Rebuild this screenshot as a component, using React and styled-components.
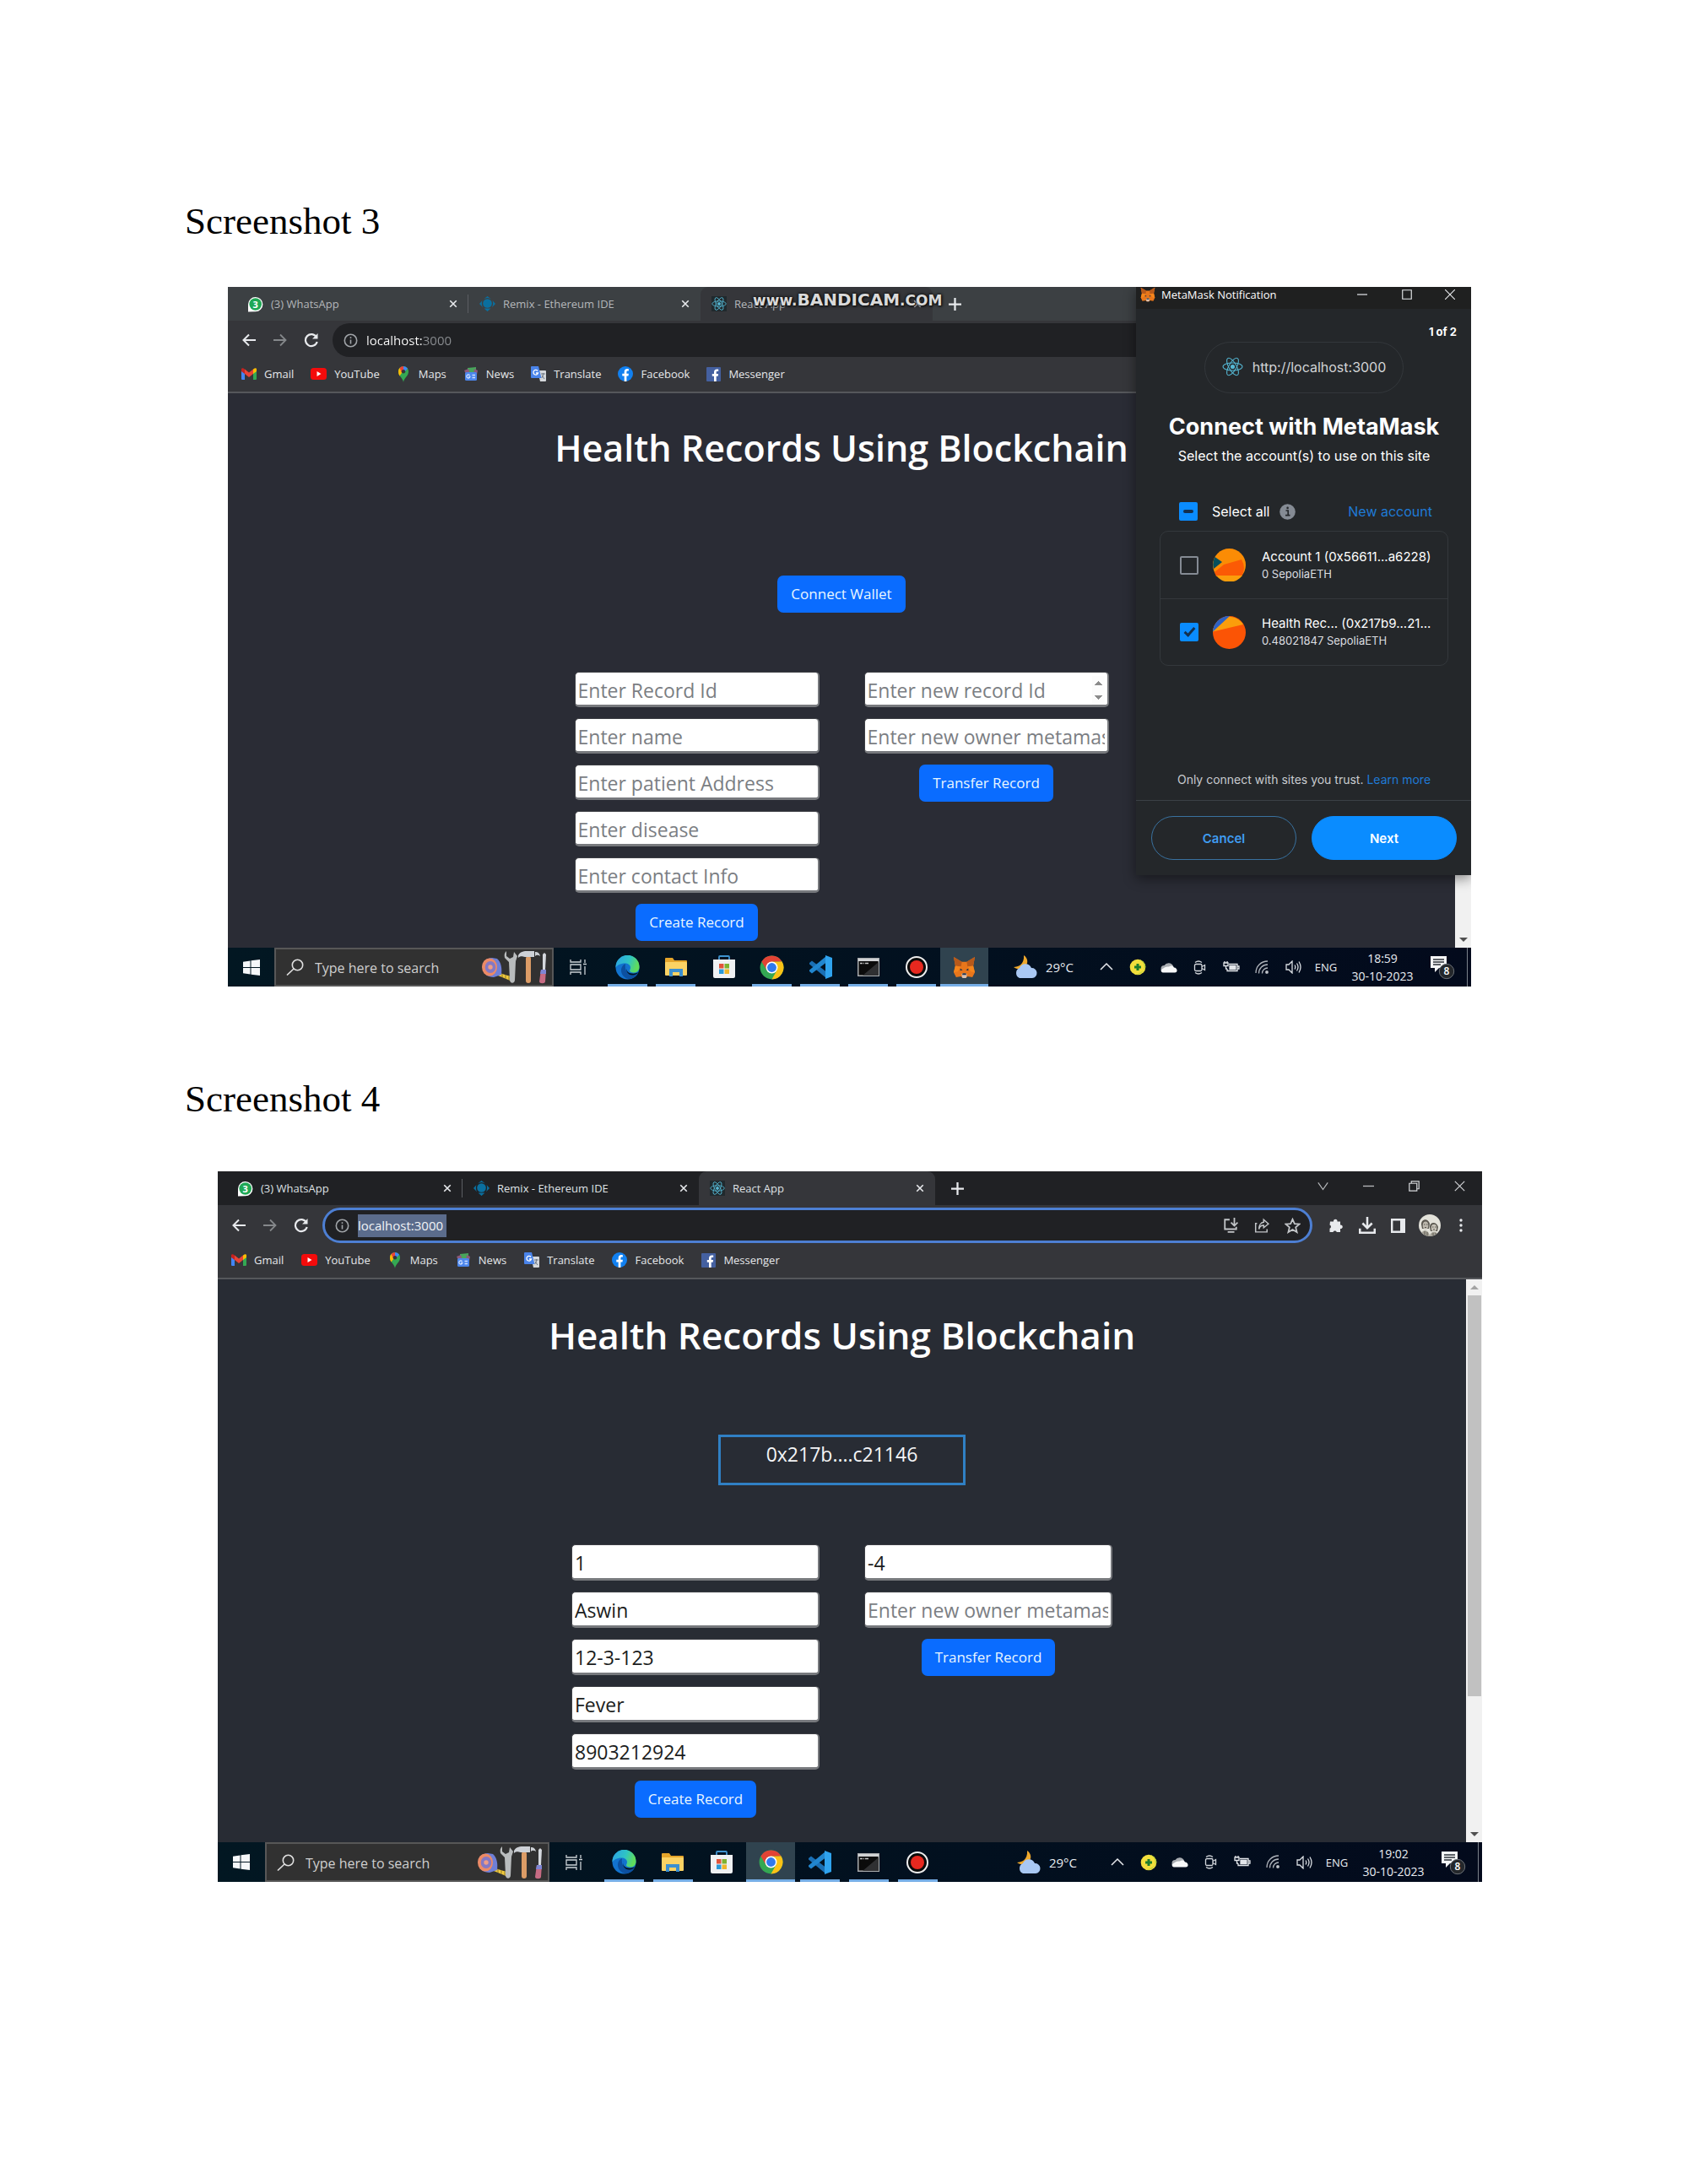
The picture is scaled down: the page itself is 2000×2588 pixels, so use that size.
import React, { useEffect, useRef } from "react";
import styled, { createGlobalStyle, css } from "styled-components";

const uiFont = '"Open Sans", "Noto Sans", sans-serif';
const walletFont = 'Inter, "Open Sans", sans-serif';

const GlobalStyle = createGlobalStyle`
  *, *::before, *::after { box-sizing: border-box; }
  body { margin: 0; background: #fff; }
  button, input { font: inherit; color: inherit; margin: 0; padding: 0; border: 0; background: none; }
  svg { display: block; flex: none; }
`;

/* ---------- document ---------- */

const Document = styled.main`
  padding: 236px 0 0;
`;
const Caption = styled.h2`
  margin: 0;
  padding-left: 219px;
  font: 400 45px/52px "Liberation Serif", "Times New Roman", serif;
  color: #000;
`;
const Figure = styled.section`
  position: relative;
  margin: ${(p) => p.$margin};
  overflow: hidden;
  font-family: ${uiFont};
  background: ${(p) => p.$page};
`;

/* ---------- browser chrome ---------- */

const TabStrip = styled.div`
  display: flex;
  height: 40px;
  padding-left: 10px;
  background: ${(p) => (p.$dim ? "#3c4043" : "#202124")};
`;
const Tab = styled.div`
  display: flex;
  align-items: center;
  gap: 9px;
  width: ${(p) => p.$width}px;
  padding: 0 12px 0 13px;
  font-size: 13px;
  line-height: 20px;
  color: ${(p) => (p.$dim ? "#b4b7ba" : "#dfe1e5")};
  ${(p) => p.$active && css`
    background: #35363a;
    border-radius: 9px 9px 0 0;
  `}
  ${(p) => p.$divided && css`
    background: linear-gradient(#5b5e62, #5b5e62) right center / 1px 22px no-repeat;
  `}
`;
const TabTitle = styled.span`
  flex: 1;
  white-space: nowrap;
`;
const IconButton = styled.button`
  display: flex;
  align-items: center;
  justify-content: center;
  width: ${(p) => p.$w || 18}px;
  height: ${(p) => p.$h || 26}px;
  flex: none;
  color: ${(p) => p.$color || "#e8eaed"};
`;
const WindowControls = styled.div`
  display: flex;
  margin-left: auto;
  height: 34px;
  align-items: center;
`;
const Toolbar = styled.div`
  display: flex;
  align-items: center;
  height: ${(p) => p.$height}px;
  padding: 0 7px 0 16px;
  background: #35363a;
`;
const NavButtons = styled.div`
  display: flex;
  gap: 19px;
  margin-right: 16px;
`;
const Omnibox = styled.div`
  flex: 1;
  display: flex;
  align-items: center;
  height: ${(p) => (p.$focus ? 42 : 40)}px;
  padding: 0 2px 0 ${(p) => (p.$focus ? 12 : 13)}px;
  gap: 10px;
  margin-right: 9px;
  background: #202124;
  border: ${(p) => (p.$focus ? "3px solid #4d7fd3" : "0")};
  border-radius: 21px;
`;
const OmniboxActions = styled.div`
  display: flex;
  margin-left: auto;
`;
const UrlInput = styled.input`
  height: 27px;
  width: 105px;
  font-size: 15px;
  line-height: 27px;
  outline: none;
  ${(p) => p.$selected
    ? css`background: #5b6c8c; color: #f1f3f6;`
    : css`
      color: transparent;
      background: linear-gradient(90deg, #fff 67px, #8b8e92 67px);
      -webkit-background-clip: text;
      background-clip: text;
    `}
`;
const Bookmarks = styled.nav`
  display: flex;
  align-items: center;
  gap: ${(p) => p.$gap}px;
  height: 40px;
  padding: 0 16px 4px;
  background: #35363a;
  border-bottom: 2px solid #55575b;
`;
const Bookmark = styled.a`
  display: flex;
  align-items: center;
  gap: 9px;
  font-size: 13px;
  line-height: 20px;
  color: #e6e8ea;
  text-decoration: none;
`;

/* ---------- health records page ---------- */

const Viewport = styled.div`
  display: flex;
`;
const Content = styled.div`
  flex: 1;
  display: flex;
  flex-direction: column;
  align-items: center;
  padding: ${(p) => p.$pad};
`;
const Title = styled.h1`
  margin: 0 0 ${(p) => p.$gap}px;
  font-size: ${(p) => p.$size}px;
  line-height: 56px;
  font-weight: 600;
  color: #fff;
  white-space: nowrap;
`;
const Primary = styled.button`
  height: 44px;
  padding: 0 16px;
  border-radius: 7px;
  background: #0a6cff;
  color: #e9f6ff;
  font-size: 17px;
  line-height: 24px;
  white-space: nowrap;
`;
const AddressBox = styled.div`
  width: 293px;
  height: 60px;
  padding-top: 4px;
  border: 3px solid #3080c4;
  text-align: center;
  font-size: 23px;
  line-height: 32px;
  color: #f4f5f7;
`;
const Forms = styled.div`
  display: flex;
  align-items: flex-start;
  gap: 53px;
  margin-top: 70px;
`;
const Form = styled.form`
  display: flex;
  flex-direction: column;
  align-items: center;
  gap: 13px;
`;
const Field = styled.input`
  width: ${(p) => p.$w}px;
  height: ${(p) => p.$h}px;
  padding: 3px 3px 0;
  background: #fff;
  border: solid #6f7175;
  border-width: 1px 2px 3px 1px;
  border-color: #3b3d43 #77797d #77797d #3b3d43;
  border-radius: 5px;
  color: #1b1d20;
  font-size: 23px;
  &::placeholder { color: #7b7e83; opacity: 1; }
  &::-webkit-inner-spin-button {
    opacity: ${(p) => (p.$spinner ? 1 : 0)};
    ${(p) => !p.$spinner && "display: none;"}
    height: 34px;
  }
`;
const Scrollbar = styled.div`
  display: flex;
  flex-direction: column;
  align-items: center;
  justify-content: space-between;
  width: 19px;
  background: #f1f1f1;
`;
const Arrow = styled.span`
  height: 19px;
  display: flex;
  align-items: center;
  &::before {
    content: "";
    border: 5px solid transparent;
    ${(p) => (p.$up
      ? "border-bottom-color: #a3a3a3; border-top: 0;"
      : "border-top-color: #505050; border-bottom: 0;")}
  }
`;
const Thumb = styled.span`
  width: 16px;
  height: 475px;
  margin-bottom: auto;
  background: #c1c1c1;
`;

/* ---------- taskbar ---------- */

const Bar = styled.footer`
  display: flex;
  align-items: stretch;
  height: ${(p) => p.$height}px;
  background: linear-gradient(90deg, #021722, #02101f 60%, #030a1c);
  color: #e9edf2;
`;
const StartButton = styled.button`
  display: flex;
  align-items: center;
  justify-content: center;
  width: ${(p) => p.$w}px;
`;
const SearchBox = styled.label`
  display: flex;
  align-items: center;
  gap: 13px;
  width: ${(p) => p.$w}px;
  padding: 0 4px 0 12px;
  background: #313131;
  border: 2px solid #575757;
`;
const SearchInput = styled.input`
  flex: 1;
  min-width: 0;
  padding-top: 2px;
  font-size: 16px;
  &::placeholder { color: #cfcfcf; opacity: 1; }
`;
const TaskButton = styled.button`
  display: flex;
  align-items: center;
  justify-content: center;
  width: ${(p) => p.$w}px;
  background:
    ${(p) => (p.$open
      ? `linear-gradient(#76aee6, #76aee6) bottom / ${p.$current ? "100%" : "47px"} 3px no-repeat,`
      : "")}
    ${(p) => (p.$current ? "#30434f" : "transparent")};
`;
const Weather = styled.div`
  display: flex;
  align-items: center;
  gap: 9px;
  margin-left: auto;
  padding-right: ${(p) => p.$gap}px;
  font-size: 15px;
`;
const Tray = styled.div`
  display: flex;
  align-items: center;
`;
const Language = styled.span`
  width: 40px;
  text-align: center;
  font-size: 13px;
`;
const Clock = styled.time`
  width: 94px;
  text-align: center;
  font-size: 14px;
  line-height: 21px;
`;
const ShowDesktop = styled.button`
  width: 5px;
  margin-left: 5px;
  border-left: 1px solid #7c828b;
`;

/* ---------- wallet popup ---------- */

const Popup = styled.aside`
  position: absolute;
  top: 0;
  right: 0;
  width: 397px;
  height: 697px;
  display: flex;
  flex-direction: column;
  background: #24272a;
  box-shadow: 0 4px 14px rgba(0, 0, 0, 0.45);
  font-family: ${walletFont};
  color: #fff;
`;
const PopupBar = styled.header`
  display: flex;
  align-items: center;
  gap: 7px;
  height: 26px;
  padding: 0 0 8px 5px;
  background: #1f2020;
  font: 13px/18px ${uiFont};
`;
const PopupControls = styled.div`
  display: flex;
  margin-left: auto;
`;
const PopupBody = styled.div`
  flex: 1;
  display: flex;
  flex-direction: column;
  align-items: center;
  padding: 17px 27px 14px 28px;
`;
const Step = styled.span`
  align-self: flex-end;
  margin-right: -10px;
  font-size: 13px;
  line-height: 20px;
  font-weight: 700;
`;
const Origin = styled.div`
  display: flex;
  align-items: center;
  gap: 11px;
  height: 61px;
  margin-top: 2px;
  padding: 0 20px 2px;
  border: 1px solid #33373b;
  border-radius: 31px;
  font-size: 16px;
  color: #d2d4d6;
`;
const Heading = styled.h2`
  margin: 22px 0 6px;
  font-size: 27px;
  line-height: 36px;
  font-weight: 700;
  white-space: nowrap;
`;
const Sub = styled.p`
  margin: 0;
  font-size: 16px;
  line-height: 20px;
  white-space: nowrap;
`;
const SelectRow = styled.div`
  align-self: stretch;
  display: flex;
  align-items: center;
  height: 24px;
  margin: 44px 0 11px;
  padding: 0 19px 0 23px;
  font-size: 16px;
`;
const SelectLabel = styled.label`
  display: flex;
  align-items: center;
  gap: 17px;
  margin-right: 12px;
`;
const WalletLink = styled.a`
  color: #1f7ad6;
  text-decoration: none;
  ${(p) => p.$end && "margin-left: auto;"}
`;
const AccountList = styled.div`
  align-self: stretch;
  border: 1px solid #34383c;
  border-radius: 10px;
`;
const Account = styled.label`
  display: flex;
  align-items: center;
  height: 79px;
  padding: 0 0 0 23px;
  & + & { border-top: 1px solid #34383c; }
`;
const Check = styled.input`
  appearance: none;
  width: 22px;
  height: 22px;
  flex: none;
  display: flex;
  align-items: center;
  justify-content: center;
  border: 2px solid #858b94;
  border-radius: 2px;
  &:checked, &:indeterminate { background: #0a8cff; border-color: #0a8cff; }
  &:checked::after {
    content: "";
    width: 7px;
    height: 13px;
    margin-bottom: 4px;
    border: solid #14304f;
    border-width: 0 3px 3px 0;
    transform: rotate(42deg);
  }
  &:indeterminate::after {
    content: "";
    width: 12px;
    height: 4px;
    border-radius: 2px;
    background: #14304f;
  }
`;
const Avatar = styled.svg`
  margin: 0 19px 0 17px;
`;
const AccountText = styled.span`
  display: flex;
  flex-direction: column;
  font-size: 15px;
  line-height: 20px;
  white-space: nowrap;
  small { font-size: 13px; color: #dcdee0; }
`;
const Trust = styled.p`
  margin: auto 0 0;
  font-size: 14px;
  line-height: 20px;
  color: #c9ccd0;
  white-space: nowrap;
`;
const PopupFooter = styled.footer`
  display: grid;
  grid-template-columns: 1fr 1fr;
  gap: 18px;
  padding: 18px 17px 18px 18px;
  border-top: 1px solid #3b4045;
`;
const Pill = styled.button`
  height: 52px;
  border-radius: 26px;
  font-size: 15px;
  font-weight: 600;
  border: 1px solid ${(p) => (p.$solid ? "#0a8cff" : "#39719f")};
  background: ${(p) => (p.$solid ? "#0a8cff" : "transparent")};
  color: ${(p) => (p.$solid ? "#fff" : "#3f9cf0")};
`;
const Watermark = styled.div`
  position: absolute;
  top: 5px;
  left: 622px;
  display: flex;
  align-items: baseline;
  font: 700 20px/20px "DejaVu Sans", sans-serif;
  color: #dadada;
  text-shadow: 0 0 3px #111, 0 0 4px #111, 1px 1px 2px #111;
  small { font-size: 17px; }
`;

/* ---------- icons ---------- */

const WhatsAppIcon = () => (
  <svg width="19" height="19" viewBox="0 0 19 19">
    <path d="M1 18.500V9.500A8.700 8.700 0 1 1 9.700 18.300Z" fill="#fff" />
    <circle cx="9.700" cy="9.500" r="7.300" fill="#1fa855" />
    <text x="9.700" y="13.500" textAnchor="middle" fontSize="11" fontWeight="700" fill="#fff">3</text>
  </svg>
);
const RemixIcon = () => (
  <svg width="19" height="18" viewBox="0 0 19 18" fill="#0a6f9f">
    <path d="M9.500 0 14 3.500a8 8 0 0 0-9 0Z" />
    <circle cx="9.500" cy="8.500" r="5.300" />
    <path d="M3.500 5 0 9l4 4.200C2.700 10.500 2.500 7.500 3.500 5ZM15.500 5 19 9l-4 4.200c1.300-2.700 1.500-5.700.5-8.200ZM5.500 14.500h8L9.500 18Z" />
  </svg>
);
const ReactIcon = ({ size = 18, plate = true, stroke = 1.1 }) => (
  <svg width={size} height={size} viewBox="0 0 24 24" fill="none" stroke="#55b7d3" strokeWidth={stroke}>
    {plate && <rect width="24" height="24" fill="#20292d" stroke="none" />}
    <ellipse cx="12" cy="12" rx="11" ry="4.300" />
    <ellipse cx="12" cy="12" rx="11" ry="4.300" transform="rotate(60 12 12)" />
    <ellipse cx="12" cy="12" rx="11" ry="4.300" transform="rotate(120 12 12)" />
    <circle cx="12" cy="12" r="2" fill="#55b7d3" />
  </svg>
);
const Line = ({ d, w = 16, h = w, box = "0 0 16 16", sw = 2, fill = "none" }) => (
  <svg width={w} height={h} viewBox={box} fill={fill} stroke="currentColor" strokeWidth={sw}>
    <path d={d} />
  </svg>
);
const CloseIcon = () => <Line w={10} d="M2 2l12 12M14 2 2 14" sw={2.6} />;
const PlusIcon = () => <Line w={15} d="M8 0v16M0 8h16" sw={2.4} />;
const InfoIcon = () => (
  <svg width="17" height="17" viewBox="0 0 17 17" fill="none" stroke="#a0a4a8" strokeWidth="1.600">
    <circle cx="8.500" cy="8.500" r="7.200" />
    <path d="M8.500 7.500v5M8.500 4.300v1.700" />
  </svg>
);
const ReloadIcon = () => (
  <svg width="18" height="18" viewBox="0 0 18 18" fill="none" stroke="currentColor" strokeWidth="2.200">
    <path d="M15 5.500A7 7 0 1 0 15.700 11" />
    <path d="M16.500 1v6.500H10Z" fill="currentColor" stroke="none" />
  </svg>
);
const GmailIcon = () => (
  <svg width="18" height="14" viewBox="0 0 18 14">
    <path d="M0 3v9.500A1.300 1.300 0 0 0 1.300 14H4V5Z" fill="#4285f4" />
    <path d="M18 3v9.500a1.300 1.300 0 0 1-1.300 1.500H14V5Z" fill="#34a853" />
    <path d="M4 1.500 9 5.500l5-4V7l-5 4-5-4Z" fill="#ea4335" />
    <path d="M14 1.500 16 .3A1.500 1.500 0 0 1 18 2v2l-4 3Z" fill="#fbbc04" />
    <path d="M4 1.500 2 .3A1.500 1.500 0 0 0 0 2v2l4 3Z" fill="#c5221f" />
  </svg>
);
const YouTubeIcon = () => (
  <svg width="19" height="14" viewBox="0 0 19 14">
    <rect width="19" height="14" rx="3.500" fill="#f40b0b" />
    <path d="M7.500 4v6l5-3Z" fill="#fff" />
  </svg>
);
const MapsIcon = () => (
  <svg width="17" height="19" viewBox="0 0 17 19">
    <path d="M8 19C7.600 14 2 12 2 6.300A6 6 0 0 1 8 0a6 6 0 0 1 6 6.300C14 12 8.400 14 8 19Z" fill="#34a853" />
    <path d="M2 6.300A6 6 0 0 1 3.500 2.100l4 3.900-4 5.600A9 9 0 0 1 2 6.300Z" fill="#fbbc04" />
    <path d="M3.500 2.100A6 6 0 0 1 8 0v5L6 7.500Z" fill="#ea4335" />
    <path d="M8 0a6 6 0 0 1 5 2.800L8 8Z" fill="#4285f4" />
    <circle cx="8" cy="6.300" r="2.200" fill="#35363a" />
  </svg>
);
const NewsIcon = () => (
  <svg width="18" height="16" viewBox="0 0 18 16">
    <path d="M5 1l10-1v8H5Z" fill="#48a55b" />
    <path d="M1 4l5-2 2 6H3ZM13 2l4 2-1 5h-4Z" fill="#8d5a7c" />
    <rect x="2" y="6" width="14" height="10" rx="1.500" fill="#4c86ec" />
    <path d="M7.500 9.800a2 2 0 1 0 .3 1.700H6.300M10.500 9.500h3.500M10.500 12.500h3.500" stroke="#cfe0ff" fill="none" strokeWidth="1.300" />
  </svg>
);
const TranslateIcon = () => (
  <svg width="18" height="18" viewBox="0 0 18 18">
    <path d="M8 5h9a1 1 0 0 1 1 1v11a1 1 0 0 1-1 1h-6Z" fill="#d5d8dc" />
    <path d="M0 1a1 1 0 0 1 1-1h8l3.500 14H1a1 1 0 0 1-1-1Z" fill="#4a84ea" />
    <path d="M8 5.500A2.800 2.800 0 1 0 8.500 8H6" stroke="#fff" fill="none" strokeWidth="1.300" />
    <path d="M12 9h5M14.500 8v1c0 3-1 4-2 5M13 11l3 4" stroke="#6b7480" fill="none" />
  </svg>
);
const FacebookIcon = () => (
  <svg width="18" height="18" viewBox="0 0 18 18">
    <circle cx="9" cy="9" r="9" fill="#1180f0" />
    <path d="M7.700 18v-6.500H5.300V8.800h2.400V6.700c0-2.400 1.400-3.600 3.500-3.600l1.700.1v2.400h-1.200c-1 0-1.300.6-1.300 1.300v1.900h2.500l-.4 2.700h-2.100V18Z" fill="#fff" />
  </svg>
);
const MessengerIcon = () => (
  <svg width="17" height="17" viewBox="0 0 17 17">
    <rect width="17" height="17" rx="1" fill="#4460a0" />
    <path d="M9 17v-6.300H6.800V8H9V6.100C9 3.700 10.300 2.500 12.400 2.500l1.800.1V5h-1.300c-1 0-1.200.5-1.200 1.200V8h2.400l-.4 2.700h-2V17Z" fill="#fff" />
  </svg>
);
const FoxIcon = ({ size }) => (
  <svg width={size} height={size} viewBox="0 0 28 28">
    <path d="M1 1l10 6h6l10-6-2 11 2 8-3 6-6-1-2 2h-4l-2-2-6 1-3-6 2-8Z" fill="#e8761b" />
    <path d="M1 1l10 6-1 6-7-1ZM27 1l-10 6 1 6 7-1Z" fill="#b8591a" />
    <path d="M3 12l7 1-4 6-5 1ZM25 12l-7 1 4 6 5 1Z" fill="#f6851b" />
    <path d="M9 15l3 2-3 1ZM19 15l-3 2 3 1Z" fill="#23344a" />
    <path d="M11 22l1-1h4l1 1v3l-1 2h-4l-1-2Z" fill="#d7c1b3" />
    <path d="M12 21h4l.5 2h-5Z" fill="#23344a" />
  </svg>
);
const WindowsIcon = () => (
  <svg width="20" height="19" viewBox="0 0 20 19" fill="#f5f7f9">
    <path d="M0 2.700 8.500 1.500V9H0ZM9.500 1.300 20 0v9H9.500ZM0 10h8.500v7.500L0 16.300ZM9.500 10H20v9L9.500 17.700Z" />
  </svg>
);
const SearchIcon = () => (
  <svg width="21" height="20" viewBox="0 0 21 20" fill="none" stroke="#e0e0e0" strokeWidth="1.600">
    <circle cx="13.500" cy="7.500" r="6.200" />
    <path d="M9 12 1 19.500" />
  </svg>
);
const ToolsIcon = () => (
  <svg width="80" height="40" viewBox="0 0 80 40">
    <path d="M22 27 38 32l-1 5-17-7Z" fill="#f2cb3d" />
    <path d="M25 28v4M29 29v5M33 31v4" stroke="#8f7a2c" />
    <path d="M2 22C0 14 7 9 13 9l6 1c5 4 6 12 5 19l-9 3C8 32 3 28 2 22Z" fill="#6f7fd6" />
    <ellipse cx="10" cy="20" rx="9" ry="10.500" fill="#ec8a66" />
    <ellipse cx="11" cy="20" rx="6.300" ry="7" fill="#8478c4" />
    <circle cx="11" cy="20" r="2.700" fill="#ef9d86" />
    <path d="M30 1v6l4 3 4-2 1-6 4 5-2 6-1 22c0 5-6 5-6 0l-1-21-5-5c-1-4 0-6 2-8Z" fill="#b9bcbd" />
    <rect x="53" y="7" width="6" height="32" rx="3" fill="#dc9c66" />
    <path d="M44 6c3-5 7-5 12-5h7v7H52c-3 0-4-2-8 1ZM64 2c3 0 5 1 6 5-2-1-4-2-6 0Z" fill="#cdd1d6" />
    <path d="M73 5l2-2 2 2-1 18h-3Z" fill="#d5d8dd" />
    <path d="M71 23h6l-1 14c0 3-7 3-7 0Z" fill="#c76b83" />
    <path d="M71 23h6v5h-7Z" fill="#7f86d4" />
  </svg>
);
const TaskViewIcon = () => (
  <svg width="21" height="20" viewBox="0 0 21 20" fill="none" stroke="#cdd2d6" strokeWidth="1.300">
    <path d="M1 1v3h12V1M1 7h12v6H1ZM1 19v-3h12v3M18 1v4M18 9v10M16 6.500h4" />
  </svg>
);
const EdgeIcon = () => (
  <svg width="29" height="29" viewBox="0 0 29 29">
    <defs>
      <linearGradient id="edge" x1="0" x2="1" y1="0" y2=".3">
        <stop offset="0" stopColor="#2a9fe8" /><stop offset=".6" stopColor="#2fc4c4" /><stop offset="1" stopColor="#5fdc5c" />
      </linearGradient>
    </defs>
    <circle cx="14.500" cy="14.500" r="14" fill="#1273cf" />
    <path d="M.5 14.500A14 14 0 0 1 28.500 13c.5 5-3 7.500-7 7.500-3 0-4.500-1.200-4.500-2.400 0-1 1-1.500 1-3.600 0-3-3-5-6.500-5C6 9.500 2 12 .5 14.500Z" fill="url(#edge)" />
    <path d="M12 10c-4 2-6 6-4.500 11 1.300 4.500 6 7.500 10.500 7 4-.8 7-3.500 8.500-6-8 3.500-16-1-14.500-12Z" fill="#0c50a0" />
    <path d="M13.500 13c-1.500 3 .5 8 6 8.600 3 .3 5.500-.3 7.500-1.600-1 2.500-3 3-5.500 3.500-6 .7-10-5-8-10.500Z" fill="#02121f" />
  </svg>
);
const FolderIcon = () => (
  <svg width="26" height="24" viewBox="0 0 26 24">
    <path d="M0 2a1 1 0 0 1 1-1h8l2 3h14a1 1 0 0 1 1 1v5H0Z" fill="#e5a52b" />
    <rect y="6" width="26" height="16" rx="1" fill="#fbd264" />
    <path d="M5 14h16v9h-4v-5H9v5H5Z" fill="#3b8fd0" />
  </svg>
);
const StoreIcon = () => (
  <svg width="28" height="28" viewBox="0 0 28 28">
    <path d="M8 6V2a1 1 0 0 1 1-1h10a1 1 0 0 1 1 1v4" fill="none" stroke="#3f93cf" strokeWidth="1.800" />
    <path d="M1 5h26v20a2 2 0 0 1-2 2H3a2 2 0 0 1-2-2Z" fill="#eff1f3" />
    <path d="M8 10h5.500v5.500H8Z" fill="#e2543a" /><path d="M14.500 10H20v5.500h-5.500Z" fill="#7db32f" />
    <path d="M8 16.500h5.500V22H8Z" fill="#2a9ad8" /><path d="M14.500 16.500H20V22h-5.500Z" fill="#efb62a" />
  </svg>
);
const ChromeIcon = () => (
  <svg width="29" height="29" viewBox="0 0 48 48">
    <circle cx="24" cy="24" r="23" fill="#34a853" />
    <path d="M24 1A23 23 0 0 1 44 12.500L24 13 14 29.500 4 12.500A23 23 0 0 1 24 1Z" fill="#e24335" />
    <path d="M44 12.500A23 23 0 0 1 24 47l10-17.500L24 13Z" fill="#fbc216" />
    <circle cx="24" cy="24" r="11.500" fill="#fff" />
    <circle cx="24" cy="24" r="9" fill="#3079ee" />
  </svg>
);
const CodeIcon = () => (
  <svg width="28" height="28" viewBox="0 0 28 28">
    <path d="M1 9l3-2.500 17 13V27L1 10.500Z" fill="#1a6fb4" />
    <path d="M1 19l3 2.500 17-13V1L1 17.500Z" fill="#2186cf" />
    <path d="M20 0l8 3v22l-8 3Z" fill="#2fa3ee" />
  </svg>
);
const TerminalIcon = () => (
  <svg width="26" height="22" viewBox="0 0 26 22">
    <rect x=".75" y=".75" width="24.500" height="20.500" fill="#0b0b0b" stroke="#a9acae" strokeWidth="1.500" />
    <path d="M1 1h24v3H1Z" fill="#d0d2d4" />
    <path d="M3 6.500h3M7 6.500h1M9 6.500h4" stroke="#c4c4c4" strokeWidth="1.400" />
    <path d="M25 5v16H6Z" fill="#2f3032" />
  </svg>
);
const RecordIcon = () => (
  <svg width="26" height="26" viewBox="0 0 26 26">
    <circle cx="13" cy="13" r="12" fill="#0a0a0a" stroke="#eeeeee" strokeWidth="2" />
    <circle cx="13" cy="13" r="8" fill="#e6281f" />
  </svg>
);
const WeatherIcon = () => (
  <svg width="29" height="28" viewBox="0 0 29 28">
    <path d="M12 0c5 3 6 10 1 14-4 3-9 3-13 0 5 0 13-3 12-14Z" fill="#f0a92c" />
    <path d="M7 27a6.500 6.500 0 0 1 0-12 7.500 7.500 0 0 1 14 0 6 6 0 0 1 1 12Z" fill="#a9c8f3" />
  </svg>
);
const GreenIcon = () => (
  <svg width="20" height="20" viewBox="0 0 20 20">
    <circle cx="10" cy="10" r="9.300" fill="#f3df3c" />
    <path d="M10 .7a9.300 9.300 0 0 1 9.300 9.300c-4 6-8 8-12 8.700A9 9 0 0 0 10 .7Z" fill="#b4cf3a" />
    <path d="M8.500 6h3v2.500H14v3h-2.500V14h-3v-2.500H6v-3h2.500Z" fill="#1e7d2c" />
  </svg>
);
const CloudIcon = () => (
  <svg width="20" height="13" viewBox="0 0 20 13">
    <path d="M4.500 12a4 4 0 0 1 0-8A6 6 0 0 1 15 4.500L10 12Z" fill="#a9adb2" />
    <path d="M4 12.500C1.500 12.500 0 11 1 9c3-2 5-4 9-3.500 2-1.500 5-1.500 6 1 4 0 5 6 1 6Z" fill="#f7f8f9" />
  </svg>
);
const MeetIcon = () => (
  <svg width="15" height="17" viewBox="0 0 15 17" fill="none" stroke="#d3d7dc" strokeWidth="1.300">
    <rect x="1.500" y="4.500" width="8.500" height="8" rx="1.500" />
    <path d="M10 7.500l3.500-2v6l-3.500-2M2 2.500q4-3 8 0M2 14.500q4 3 8 0" />
  </svg>
);
const BatteryIcon = () => (
  <svg width="20" height="15" viewBox="0 0 20 15" fill="none" stroke="#e3e6ea" strokeWidth="1.300">
    <path d="M7 3.500h10v8H5V9M17 6h2v3h-2M1 2h5v3.500H1ZM3.500 5.500V9H5M2 0v2M5 0v2" />
    <path d="M8 5.500h7v4H8Z" fill="#e3e6ea" />
  </svg>
);
const NetworkIcon = () => (
  <svg width="17" height="17" viewBox="0 0 17 17" fill="none" stroke="#aeb3ba" strokeWidth="1.300">
    <path d="M1 15C1 7 7 1 15 1M4.500 15.500C4.500 9.500 9 5 15 5M8.500 15.500c0-4 3-6.500 6.500-6.500" />
    <circle cx="14" cy="14" r="1.300" fill="#e3e6ea" />
  </svg>
);
const VolumeIcon = () => (
  <svg width="19" height="16" viewBox="0 0 19 16" fill="none" stroke="#d9dde2" strokeWidth="1.300">
    <path d="M1 5h3l4-4v14l-4-4H1ZM11 5.500q1.500 2.500 0 5M13.500 3.500q3 4.500 0 9M16 1.500q4 6.500 0 13" />
  </svg>
);
const ChevronIcon = () => <Line w={16} d="M1 11l7-7 7 7" sw={1.5} />;
const NotificationIcon = () => (
  <svg width="30" height="30" viewBox="0 0 30 30">
    <path d="M1 2h19v14h-9l-5 5v-5H1Z" fill="#f4f5f6" />
    <path d="M4 6h13M4 9h13M4 12h9" stroke="#2b3038" strokeWidth="1.300" />
    <circle cx="20" cy="20" r="8.700" fill="#24272b" stroke="#6b7077" />
    <text x="20" y="24" textAnchor="middle" fontSize="12" fontWeight="600" fill="#fff">8</text>
  </svg>
);
const InstallIcon = () => <Line w={18} d="M7 2H2v10h12V9.500M5 15h7M12 0v8M8.500 5 12 8.500 15.500 5" sw={1.6} />;
const ShareIcon = () => <Line w={18} d="M3 6H1.500v9h12v-3M10 2l5 4.500-5 4V8C7 8 5.500 9.500 5 12 5 8 7 5 10 4.700Z" sw={1.3} />;
const StarIcon = () => <Line w={19} d="M8 1.500l2 4.500 4.800.4-3.700 3.200 1.200 4.800L8 11.800l-4.300 2.600 1.200-4.800L1.200 6.400 6 6Z" sw={1.5} />;
const PuzzleIcon = () => (
  <svg width="18" height="18" viewBox="0 0 18 18" fill="currentColor">
    <path d="M2 4.500h4a2.300 2.300 0 1 1 4.500 0H14V8.500a2.300 2.300 0 1 1 0 4.500v4h-4.200a2.300 2.300 0 0 0-4.300 0H1.500v-4.200a2.300 2.300 0 0 0 0-4.300Z" />
  </svg>
);
const DownloadIcon = () => <Line w={20} d="M8 0v10M3.500 6 8 10.500 12.500 6M1 11v4h14v-4" sw={2} />;
const SidePanelIcon = () => (
  <svg width="17" height="17" viewBox="0 0 17 17">
    <path d="M1.200 1.200h14.600v14.600H1.200Z" fill="none" stroke="currentColor" strokeWidth="2.400" />
    <path d="M11 1h5v15h-5Z" fill="currentColor" />
  </svg>
);
const ProfileIcon = () => (
  <svg width="26" height="26" viewBox="0 0 26 26">
    <defs><clipPath id="face"><circle cx="13" cy="13" r="13" /></clipPath></defs>
    <g clipPath="url(#face)">
      <rect width="26" height="26" fill="#e3e2da" />
      <path d="M3 12c0-7 8-8 10-1l-1 6H4ZM13 15c0-6 8-7 10 0l-1 5h-8Z" fill="#5a574f" />
      <ellipse cx="8" cy="13" rx="3.300" ry="4.500" fill="#bdb9ae" />
      <ellipse cx="18" cy="16" rx="3.300" ry="4.300" fill="#c6c2b7" />
      <path d="M6 12h1.500M9 12h1.500M7 15.500h2M16 15h1.500M19 15h1.500M17 18h2" stroke="#5a574f" />
      <path d="M2 26c1-9 10-9 11 0ZM13 26c1-7 9-7 11 0Z" fill="#a3a095" />
      <path d="M7 20v6M10 21v5M17 22v4M20 22v4" stroke="#605d55" />
    </g>
  </svg>
);
const DotsIcon = () => (
  <svg width="4" height="16" viewBox="0 0 4 16" fill="currentColor">
    <circle cx="2" cy="2" r="1.700" /><circle cx="2" cy="8" r="1.700" /><circle cx="2" cy="14" r="1.700" />
  </svg>
);
const InfoDot = () => (
  <svg width="19" height="19" viewBox="0 0 19 19">
    <circle cx="9.500" cy="9.500" r="9.300" fill="#858b94" />
    <path d="M7.500 8h2.700v5.500M7 13.700h5.500" stroke="#24272a" strokeWidth="1.700" fill="none" />
    <circle cx="9.600" cy="4.900" r="1.300" fill="#24272a" />
  </svg>
);

/* ---------- composed parts ---------- */

const bookmarks = [
  ["Gmail", GmailIcon], ["YouTube", YouTubeIcon], ["Maps", MapsIcon], ["News", NewsIcon],
  ["Translate", TranslateIcon], ["Facebook", FacebookIcon], ["Messenger", MessengerIcon],
];

const tabs = [
  ["(3) WhatsApp", WhatsAppIcon], ["Remix - Ethereum IDE", RemixIcon], ["React App", ReactIcon],
];

const apps = [
  ["Task view", TaskViewIcon, false], ["Edge", EdgeIcon, true], ["File Explorer", FolderIcon, true],
  ["Microsoft Store", StoreIcon, false], ["Chrome", ChromeIcon, true], ["Visual Studio Code", CodeIcon, true],
  ["Command Prompt", TerminalIcon, true], ["Bandicam", RecordIcon, true],
];

const tray = [
  ["Show hidden icons", ChevronIcon], ["Antivirus", GreenIcon], ["OneDrive", CloudIcon], ["Meet now", MeetIcon],
  ["Battery", BatteryIcon], ["Network", NetworkIcon], ["Volume", VolumeIcon],
];

function Chrome({ dim, tabWidth, toolbarHeight, bookmarkGap, focused }) {
  return (
    <>
      <TabStrip $dim={dim}>
        {tabs.map(([name, Icon], i) => (
          <Tab key={name} $width={tabWidth} $dim={dim} $active={i === 2} $divided={i === 0}>
            <Icon />
            <TabTitle>{name}</TabTitle>
            <IconButton $w={12} aria-label={`Close ${name}`}><CloseIcon /></IconButton>
          </Tab>
        ))}
        <IconButton $w={52} $h={40} aria-label="New tab"><PlusIcon /></IconButton>
        {focused && (
          <WindowControls>
            <IconButton $w={54} $color="#b9bbbe" aria-label="Search tabs"><Line w={13} d="M1 3l7 10 7-10" sw={1.4} /></IconButton>
            <IconButton $w={54} $color="#b9bbbe" aria-label="Minimize"><Line w={13} d="M0 8h16" sw={1.6} /></IconButton>
            <IconButton $w={54} $color="#d5d7da" aria-label="Restore"><Line w={13} d="M1 4h11v11H1ZM4 4V1h11v11h-3" sw={1.5} /></IconButton>
            <IconButton $w={54} $color="#d5d7da" aria-label="Close"><Line w={13} d="M1 1l14 14M15 1 1 15" sw={1.4} /></IconButton>
          </WindowControls>
        )}
      </TabStrip>
      <Toolbar $height={toolbarHeight}>
        <NavButtons>
          <IconButton aria-label="Back"><Line d="M16 8H2M8 1.500 1.500 8 8 14.500" /></IconButton>
          <IconButton $color="#85888b" aria-label="Forward"><Line d="M0 8h14M8 1.500 14.500 8 8 14.500" sw={1.8} /></IconButton>
          <IconButton aria-label="Reload"><ReloadIcon /></IconButton>
        </NavButtons>
        <Omnibox $focus={focused}>
          <InfoIcon />
          <UrlInput aria-label="Address" defaultValue="localhost:3000" $selected={focused} />
          {focused && (
            <OmniboxActions>
              <IconButton $w={37} $color="#c3c6c9" aria-label="Install"><InstallIcon /></IconButton>
              <IconButton $w={37} $color="#c3c6c9" aria-label="Share"><ShareIcon /></IconButton>
              <IconButton $w={37} $color="#c3c6c9" aria-label="Bookmark"><StarIcon /></IconButton>
            </OmniboxActions>
          )}
        </Omnibox>
        {focused && (
          <>
            <IconButton $w={37} aria-label="Extensions"><PuzzleIcon /></IconButton>
            <IconButton $w={37} aria-label="Downloads"><DownloadIcon /></IconButton>
            <IconButton $w={37} aria-label="Side panel"><SidePanelIcon /></IconButton>
            <IconButton $w={37} aria-label="Profile"><ProfileIcon /></IconButton>
            <IconButton $w={37} aria-label="Menu"><DotsIcon /></IconButton>
          </>
        )}
      </Toolbar>
      <Bookmarks $gap={bookmarkGap}>
        {bookmarks.map(([name, Icon]) => (
          <Bookmark key={name} href="#"><Icon />{name}</Bookmark>
        ))}
      </Bookmarks>
    </>
  );
}

const createLabels = ["Enter Record Id", "Enter name", "Enter patient Address", "Enter disease", "Enter contact Info"];

function RecordForms({ fieldWidth, fieldHeight, values = [], transferId, spinner }) {
  const size = { $w: fieldWidth, $h: fieldHeight };
  const stop = (e) => e.preventDefault();
  return (
    <Forms>
      <Form onSubmit={stop}>
        {createLabels.map((label, i) => (
          <Field key={label} {...size} aria-label={label} placeholder={label} defaultValue={values[i]} />
        ))}
        <Primary>Create Record</Primary>
      </Form>
      <Form onSubmit={stop}>
        <Field {...size} type="number" $spinner={spinner} aria-label="New record Id" placeholder="Enter new record Id" defaultValue={transferId} />
        <Field {...size} aria-label="New owner metamask address" placeholder="Enter new owner metamask address" />
        <Primary>Transfer Record</Primary>
      </Form>
    </Forms>
  );
}

function Taskbar({ height, startWidth, searchWidth, cell, current, time, fox, weatherGap }) {
  return (
    <Bar $height={height}>
      <StartButton $w={startWidth} aria-label="Start"><WindowsIcon /></StartButton>
      <SearchBox $w={searchWidth}>
        <SearchIcon />
        <SearchInput aria-label="Search" placeholder="Type here to search" />
        <ToolsIcon />
      </SearchBox>
      {apps.map(([name, Icon, open]) => (
        <TaskButton key={name} $w={name === "Task view" ? 59 : cell} $open={open} $current={current === name} aria-label={name}>
          <Icon />
        </TaskButton>
      ))}
      {fox && <TaskButton $w={cell} $open $current aria-label="MetaMask"><FoxIcon size={27} /></TaskButton>}
      <Weather $gap={weatherGap}><WeatherIcon />29°C</Weather>
      <Tray>
        {tray.map(([name, Icon]) => (
          <IconButton key={name} $w={37} aria-label={name}><Icon /></IconButton>
        ))}
        <Language>ENG</Language>
        <Clock>{time}<br />30-10-2023</Clock>
        <IconButton $w={48} $h={40} aria-label="Notifications"><NotificationIcon /></IconButton>
      </Tray>
      <ShowDesktop aria-label="Show desktop" />
    </Bar>
  );
}

function WalletPopup() {
  const all = useRef(null);
  useEffect(() => {
    if (all.current) all.current.indeterminate = true;
  }, []);
  return (
    <Popup>
      <PopupBar>
        <FoxIcon size={18} />
        MetaMask Notification
        <PopupControls>
          <IconButton $w={53} $h={18} aria-label="Minimize"><Line w={12} d="M0 8h16" sw={1.6} /></IconButton>
          <IconButton $w={53} $h={18} aria-label="Maximize"><Line w={12} d="M1 1h14v14H1Z" sw={1.5} /></IconButton>
          <IconButton $w={50} $h={18} aria-label="Close"><Line w={12} d="M0 0l16 16M16 0 0 16" sw={1.5} /></IconButton>
        </PopupControls>
      </PopupBar>
      <PopupBody>
        <Step>1 of 2</Step>
        <Origin><ReactIcon size={25} plate={false} stroke={1} />http://localhost:3000</Origin>
        <Heading>Connect with MetaMask</Heading>
        <Sub>Select the account(s) to use on this site</Sub>
        <SelectRow>
          <SelectLabel><Check type="checkbox" ref={all} />Select all</SelectLabel>
          <InfoDot />
          <WalletLink href="#" $end>New account</WalletLink>
        </SelectRow>
        <AccountList>
          <Account>
            <Check type="checkbox" />
            <Avatar width="39" height="39" viewBox="0 0 39 39">
              <circle cx="19.500" cy="19.500" r="19.500" fill="#fb8c05" />
              <path d="M2 28 13 19 34 13a19.500 19.500 0 0 1 0 20H4Z" fill="#fb5a05" />
              <path d="M2.500 10 11 16 1 24A19 19 0 0 1 2.500 10Z" fill="#074f5c" />
              <path d="M4 32h31a19.500 19.500 0 0 1-31 0Z" fill="#fb9d0b" />
            </Avatar>
            <AccountText>Account 1 (0x56611...a6228)<small>0 SepoliaETH</small></AccountText>
          </Account>
          <Account>
            <Check type="checkbox" defaultChecked />
            <Avatar width="39" height="39" viewBox="0 0 39 39">
              <circle cx="19.500" cy="19.500" r="19.500" fill="#fb5405" />
              <path d="M0 18.500A19.500 19.500 0 0 1 36 10L0 18.500Z" fill="#fb9d0b" />
              <path d="M0 18.500A19.500 19.500 0 0 1 20 0Z" fill="#2e62c4" />
            </Avatar>
            <AccountText>Health Rec... (0x217b9...21...<small>0.48021847 SepoliaETH</small></AccountText>
          </Account>
        </AccountList>
        <Trust>Only connect with sites you trust. <WalletLink href="#">Learn more</WalletLink></Trust>
      </PopupBody>
      <PopupFooter>
        <Pill>Cancel</Pill>
        <Pill $solid>Next</Pill>
      </PopupFooter>
    </Popup>
  );
}

export default function App() {
  return (
    <>
      <GlobalStyle />
      <Document>
        <Caption>Screenshot 3</Caption>
        <Figure $margin="52px 257px 107px 270px" $page="#2a2c35">
          <Chrome dim tabWidth={275} toolbarHeight={46} bookmarkGap={20} />
          <Viewport>
            <Content $pad="37px 0 8px">
              <Title $size={43} $gap={123}>Health Records Using Blockchain</Title>
              <Primary>Connect Wallet</Primary>
              <RecordForms fieldWidth={290} fieldHeight={42} spinner />
            </Content>
            <Scrollbar><span /><Arrow /></Scrollbar>
          </Viewport>
          <Taskbar height={46} startWidth={55} searchWidth={331} cell={57} time="18:59" fox weatherGap={20} />
          <Watermark><small>www.</small>BANDICAM<small>.COM</small></Watermark>
          <WalletPopup />
        </Figure>
        <Caption>Screenshot 4</Caption>
        <Figure $margin="60px 244px 0 258px" $page="#282c34">
          <Chrome focused tabWidth={280} toolbarHeight={48} bookmarkGap={21} />
          <Viewport>
            <Content $pad="38px 0 29px">
              <Title $size={44} $gap={90}>Health Records Using Blockchain</Title>
              <AddressBox>0x217b....c21146</AddressBox>
              <RecordForms
                fieldWidth={294}
                fieldHeight={43}
                values={["1", "Aswin", "12-3-123", "Fever", "8903212924"]}
                transferId="-4"
              />
            </Content>
            <Scrollbar><Arrow $up /><Thumb /><Arrow /></Scrollbar>
          </Viewport>
          <Taskbar height={47} startWidth={56} searchWidth={337} cell={58} current="Chrome" time="19:02" weatherGap={29} />
        </Figure>
      </Document>
    </>
  );
}
